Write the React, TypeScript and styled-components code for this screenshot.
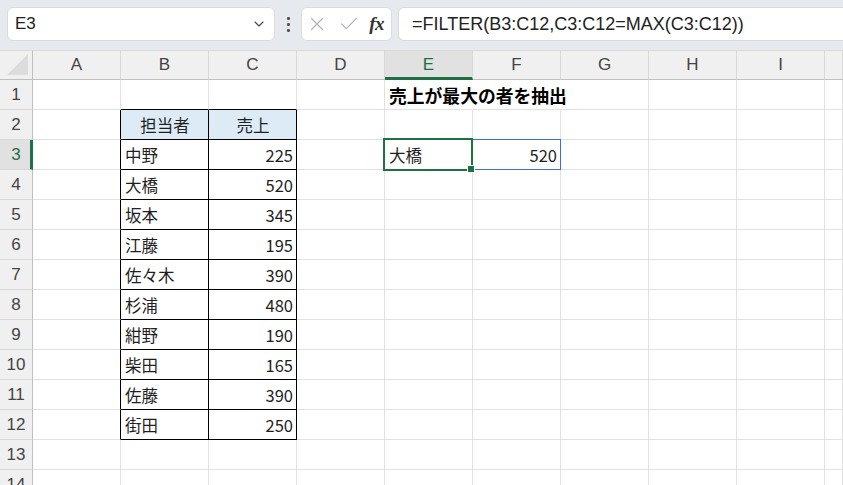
import React from "react";
import styled, { createGlobalStyle, css } from "styled-components";
import { ChevronDown, X, Check } from "lucide-react";

const GlobalStyle = createGlobalStyle`
  html, body {
    margin: 0;
    padding: 0;
    background: #fff;
    overflow: hidden;
  }
  body {
    font-family: "Liberation Sans", "Noto Sans CJK JP", sans-serif;
  }
`;

const Page = styled.div`
  width: 100vw;
  height: 100vh;
  overflow: hidden;
  display: flex;
  flex-direction: column;
`;

const FormulaBar = styled.div`
  height: 50px;
  flex: 0 0 50px;
  background: #e6e9ee;
  display: flex;
  align-items: flex-start;
  padding: 7px 0 0 7px;
  box-sizing: border-box;
`;

const Box = styled.div`
  height: 34px;
  background: #fff;
  border: 1px solid #d9dbe0;
  border-radius: 6px;
  box-sizing: border-box;
  display: flex;
  align-items: center;
`;

const NameBox = styled(Box)`
  width: 268px;
  padding: 0 7px;
  justify-content: space-between;
  font-size: 17px;
  color: #222;
`;

const Dots = styled.div`
  width: 26px;
  height: 34px;
  display: flex;
  flex-direction: column;
  align-items: center;
  justify-content: center;
  gap: 3px;
  span {
    width: 3px;
    height: 3px;
    background: #555;
    border-radius: 1px;
  }
`;

const ButtonBox = styled(Box)`
  width: 91px;
  padding: 0 7px 0 4px;
  justify-content: space-between;
  color: #b4b4b4;
`;

const Fx = styled.span`
  font-family: "Liberation Serif", "DejaVu Serif", serif;
  font-style: italic;
  font-weight: bold;
  font-size: 19px;
  color: #333;
  letter-spacing: -0.5px;
`;

const FormulaBox = styled(Box)`
  flex: 1;
  margin-left: 6px;
  border-right: none;
  border-radius: 6px 0 0 6px;
  padding-left: 13px;
  font-size: 18px;
  color: #222;
  white-space: nowrap;
`;

const Sheet = styled.div`
  flex: 1;
  display: grid;
  grid-template-columns: 33px repeat(9, 88px) 1fr;
  grid-auto-rows: 30px;
  overflow: hidden;
`;

const Corner = styled.div`
  background: #f0f0f0;
  border-right: 1px solid #bfbfbf;
  border-bottom: 1px solid #bfbfbf;
  border-top: 1px solid #dadada;
  box-sizing: border-box;
  position: relative;
  &::after {
    content: "";
    position: absolute;
    right: 4px;
    bottom: 4px;
    width: 0;
    height: 0;
    border-left: 21px solid transparent;
    border-bottom: 21px solid #dcdcdc;
  }
`;

const ColHead = styled.div<{ $active?: boolean }>`
  background: ${(p) => (p.$active ? "#e1e1e1" : "#f0f0f0")};
  border-top: 1px solid #dadada;
  border-right: 1px solid #d8d8d8;
  border-bottom: ${(p) => (p.$active ? "3px solid #1e7145" : "1px solid #bfbfbf")};
  box-sizing: border-box;
  display: flex;
  align-items: center;
  justify-content: center;
  padding-top: ${(p) => (p.$active ? "2px" : "0")};
  font-size: 17px;
  color: ${(p) => (p.$active ? "#1e7145" : "#444")};
`;

const RowHead = styled.div<{ $active?: boolean }>`
  background: ${(p) => (p.$active ? "#e1e1e1" : "#f0f0f0")};
  border-right: ${(p) => (p.$active ? "3px solid #1e7145" : "1px solid #bfbfbf")};
  border-bottom: 1px solid #d8d8d8;
  box-sizing: border-box;
  display: flex;
  align-items: center;
  justify-content: center;
  padding-left: ${(p) => (p.$active ? "2px" : "0")};
  font-size: 17px;
  color: ${(p) => (p.$active ? "#1e7145" : "#444")};
`;

const GRID = "#e1e1e1";
const INK = "#000";

const Cell = styled.div<{
  $right?: string;
  $bottom?: string;
  $fill?: string;
  $align?: "left" | "right" | "center";
  $bold?: boolean;
}>`
  position: relative;
  box-sizing: border-box;
  background: ${(p) => p.$fill || "#fff"};
  border-right: ${(p) => (p.$right === "none" ? "1px solid transparent" : `1px solid ${p.$right || GRID}`)};
  border-bottom: 1px solid ${(p) => p.$bottom || GRID};
  display: flex;
  align-items: center;
  justify-content: ${(p) =>
    p.$align === "right" ? "flex-end" : p.$align === "center" ? "center" : "flex-start"};
  padding: 0 3px 0 4px;
  font-family: "Noto Sans CJK JP", "Liberation Sans", sans-serif;
  font-size: 16.5px;
  color: #1f1f1f;
  white-space: nowrap;
  overflow: visible;
  ${(p) =>
    p.$bold &&
    css`
      font-weight: bold;
      font-size: 17.8px;
      color: #000;
      z-index: 1;
    `}
`;

const Selection = styled.div`
  position: absolute;
  left: -2px;
  top: -2px;
  right: -1px;
  bottom: -2px;
  border: 2px solid #1e7145;
  pointer-events: none;
  z-index: 3;
  &::after {
    content: "";
    position: absolute;
    right: -4px;
    bottom: -4px;
    width: 6px;
    height: 6px;
    background: #1e7145;
    border: 1px solid #fff;
  }
`;

const SpillBox = styled.div`
  position: absolute;
  left: -1px;
  top: -1px;
  right: -1px;
  bottom: -1px;
  border: 1px solid #3f6fc9;
  pointer-events: none;
  z-index: 2;
`;

const COLS = ["A", "B", "C", "D", "E", "F", "G", "H", "I", ""];

const people: [string, number][] = [
  ["中野", 225],
  ["大橋", 520],
  ["坂本", 345],
  ["江藤", 195],
  ["佐々木", 390],
  ["杉浦", 480],
  ["紺野", 190],
  ["柴田", 165],
  ["佐藤", 390],
  ["街田", 250],
];

type CellSpec = {
  text?: string;
  right?: string;
  bottom?: string;
  fill?: string;
  align?: "left" | "right" | "center";
  bold?: boolean;
  selected?: boolean;
  spill?: boolean;
};

function cellAt(row: number, col: number): CellSpec {
  const spec: CellSpec = {};
  const inTable = row >= 2 && row <= 12;
  // black borders round B2:C12
  if (col === 0 && inTable) spec.right = INK;
  if (row === 1 && (col === 1 || col === 2)) spec.bottom = INK;
  if (inTable && (col === 1 || col === 2)) {
    spec.right = INK;
    spec.bottom = INK;
  }
  if (row === 2 && col === 1) Object.assign(spec, { text: "担当者", fill: "#ddebf7", align: "center" });
  if (row === 2 && col === 2) Object.assign(spec, { text: "売上", fill: "#ddebf7", align: "center" });
  if (row >= 3 && row <= 12) {
    const [name, sales] = people[row - 3];
    if (col === 1) spec.text = name;
    if (col === 2) Object.assign(spec, { text: String(sales), align: "right" });
  }
  // title overflows into F1, so no gridlines under it
  if (row === 1 && col === 4) Object.assign(spec, { text: "売上が最大の者を抽出", bold: true, right: "none" });
  if (row === 1 && col === 5) spec.right = "none";
  if (row === 3 && col === 4) Object.assign(spec, { text: "大橋", selected: true });
  if (row === 3 && col === 5) Object.assign(spec, { text: "520", align: "right", spill: true });
  return spec;
}

export default function App() {
  const rows = Array.from({ length: 14 }, (_, i) => i + 1);
  return (
    <Page>
      <GlobalStyle />
      <FormulaBar>
        <NameBox>
          <span>E3</span>
          <ChevronDown size={16} color="#444" strokeWidth={1.6} />
        </NameBox>
        <Dots>
          <span />
          <span />
          <span />
        </Dots>
        <ButtonBox>
          <X size={22} strokeWidth={1.3} />
          <Check size={22} strokeWidth={1.3} />
          <Fx>fx</Fx>
        </ButtonBox>
        <FormulaBox>=FILTER(B3:C12,C3:C12=MAX(C3:C12))</FormulaBox>
      </FormulaBar>
      <Sheet>
        <Corner />
        {COLS.map((c, i) => (
          <ColHead key={i} $active={c === "E"}>
            {c}
          </ColHead>
        ))}
        {rows.map((r) => (
          <React.Fragment key={r}>
            <RowHead $active={r === 3}>{r}</RowHead>
            {COLS.map((_, ci) => {
              const s = cellAt(r, ci);
              return (
                <Cell
                  key={ci}
                  $right={s.right}
                  $bottom={s.bottom}
                  $fill={s.fill}
                  $align={s.align}
                  $bold={s.bold}
                >
                  {s.text}
                  {s.selected && <Selection />}
                  {s.spill && <SpillBox />}
                </Cell>
              );
            })}
          </React.Fragment>
        ))}
      </Sheet>
    </Page>
  );
}
